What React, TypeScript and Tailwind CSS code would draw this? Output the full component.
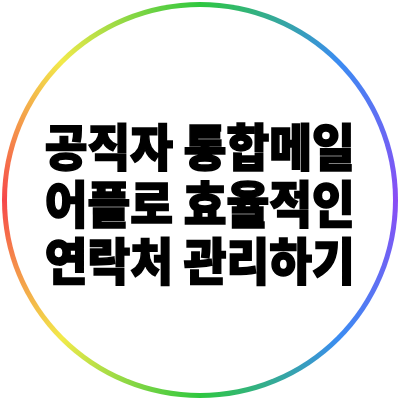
import React from 'react';

const lines = ['공직자 통합메일', '어플로 효율적인', '연락처 관리하기'];

function App() {
    return (
        <div className="flex h-[400px] w-[400px] items-center justify-center bg-white">
            <div className="flex h-[396px] w-[396px] items-center justify-center rounded-full bg-[conic-gradient(#2ec73f,#3b8cf2,#8a4df5,#3b8cf2,#2ec73f,#f2ea4a,#f6474a,#f2ea4a,#2ec73f)] p-[5px]">
                <div className="flex h-full w-full flex-col items-center justify-center gap-[3px] rounded-full bg-white pt-[2px]">
                    {lines.map((line) => (
                        <div
                            key={line}
                            className="origin-center scale-x-[0.93] whitespace-nowrap text-[50px] leading-[54px] font-black text-black [-webkit-text-stroke:1.6px_black]"
                            style={{ fontFamily: '"Noto Sans CJK KR", "Noto Sans", sans-serif' }}
                        >
                            {line}
                        </div>
                    ))}
                </div>
            </div>
        </div>
    );
}

export default App;
